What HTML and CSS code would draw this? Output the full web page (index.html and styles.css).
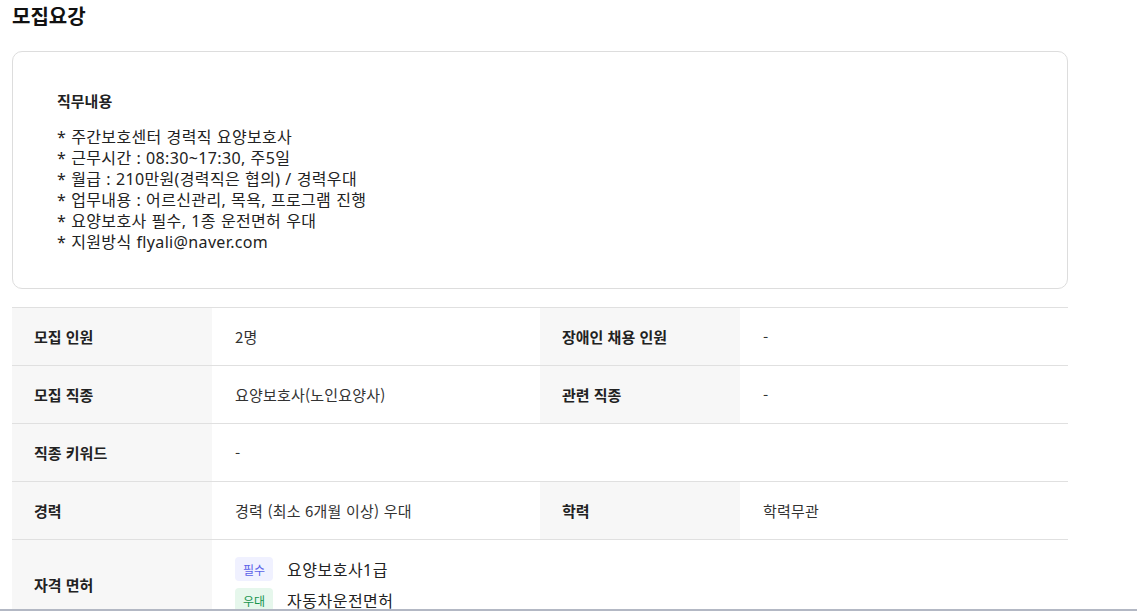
FILE: index.html
```html
<!DOCTYPE html>
<html lang="ko">
<head>
<meta charset="utf-8">
<link rel="stylesheet" href="styles.css">
</head>
<body>
<div class="page">
  <h2 class="title">모집요강</h2>
  <section class="card">
    <h3 class="card-head">직무내용</h3>
    <div class="desc">
      <p>* 주간보호센터 경력직 요양보호사</p>
      <p>* 근무시간 : 08:30~17:30, 주5일</p>
      <p>* 월급 : 210만원(경력직은 협의) / 경력우대</p>
      <p>* 업무내용 : 어르신관리, 목욕, 프로그램 진행</p>
      <p>* 요양보호사 필수, 1종 운전면허 우대</p>
      <p>* 지원방식 flyali@naver.com</p>
    </div>
  </section>
  <div class="table">
    <div class="row">
      <div class="label">모집 인원</div>
      <div class="value">2명</div>
      <div class="label">장애인 채용 인원</div>
      <div class="value">-</div>
    </div>
    <div class="row">
      <div class="label">모집 직종</div>
      <div class="value">요양보호사(노인요양사)</div>
      <div class="label">관련 직종</div>
      <div class="value">-</div>
    </div>
    <div class="row">
      <div class="label">직종 키워드</div>
      <div class="value wide">-</div>
    </div>
    <div class="row">
      <div class="label">경력</div>
      <div class="value">경력 (최소 6개월 이상) 우대</div>
      <div class="label">학력</div>
      <div class="value">학력무관</div>
    </div>
    <div class="row">
      <div class="label">자격 면허</div>
      <div class="value wide licenses">
        <div class="lic"><span class="badge req">필수</span><span class="lic-name">요양보호사1급</span></div>
        <div class="lic"><span class="badge pref">우대</span><span class="lic-name">자동차운전면허</span></div>
      </div>
    </div>
  </div>
</div>
<div class="bottom-edge"></div>
</body>
</html>
```

FILE: styles.css
```css
* { box-sizing: border-box; }
html, body { margin: 0; padding: 0; background: #fff; }
body {
  font-family: "Noto Sans CJK KR", "Noto Sans", sans-serif;
  color: #222;
  overflow: hidden;
}
.page {
  width: 1068px;
  padding-left: 12px;
}
.title {
  margin: 0;
  padding-top: 2px;
  font-size: 20px;
  line-height: 28px;
  font-weight: 700;
  color: #111;
}
.card {
  margin-top: 21px;
  border: 1px solid #dddddd;
  border-radius: 10px;
  padding: 38px 44px 35px;
}
.card-head {
  margin: 0;
  font-size: 15px;
  line-height: 22px;
  font-weight: 700;
  color: #222;
}
.desc {
  margin-top: 15px;
}
.desc p {
  margin: 0;
  height: 21px;
  overflow: visible;
  font-family: "Noto Sans", "Noto Sans CJK KR", sans-serif;
  font-size: 16px;
  line-height: 21px;
  letter-spacing: 0.35px;
  word-spacing: 0.5px;
  color: #222;
}
.table {
  margin-top: 18px;
  border-top: 1px solid #e0e0e0;
}
.row {
  display: grid;
  grid-template-columns: 200px 328px 200px 328px;
  border-bottom: 1px solid #e0e0e0;
  min-height: 58px;
}
.label {
  background: #f7f7f7;
  padding-left: 22px;
  display: flex;
  align-items: center;
  font-size: 15px;
  font-weight: 700;
  color: #222;
}
.value {
  padding-left: 23px;
  display: flex;
  align-items: center;
  font-size: 15px;
  letter-spacing: 0.2px;
  color: #333;
}
.value.wide {
  grid-column: 2 / 5;
}
.licenses {
  flex-direction: column;
  align-items: flex-start;
  gap: 7px;
  padding-top: 17px;
  padding-bottom: 16px;
}
.lic {
  display: flex;
  align-items: center;
  gap: 14px;
}
.badge {
  display: inline-flex;
  align-items: center;
  justify-content: center;
  width: 38px;
  height: 24px;
  border-radius: 4px;
  font-size: 12px;
  letter-spacing: 0;
}
.badge.req { background: #f0f1ff; color: #5b62e8; }
.badge.pref { background: #e6f7ec; color: #17944c; }
.lic-name {
  font-family: "Noto Sans", "Noto Sans CJK KR", sans-serif;
  font-size: 16px;
  letter-spacing: 0.5px;
  color: #222;
}
.bottom-edge {
  position: fixed;
  left: 0;
  right: 0;
  bottom: 0;
  height: 2px;
  background: #b3b8c4;
}
```
